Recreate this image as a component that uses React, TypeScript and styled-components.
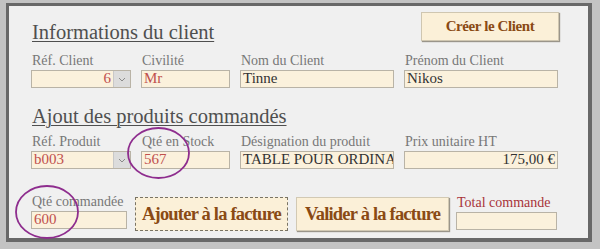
import styled, { createGlobalStyle } from "styled-components"

const GlobalStyle = createGlobalStyle`
  html, body {
    margin: 0;
    padding: 0;
    background: #c3c3c3;
  }
  body {
    font-family: "Liberation Serif", "Times New Roman", serif;
  }
`

type FieldProps = {
  label: string
  value?: string
  width: number
  tone?: "red" | "dark"
  align?: "left" | "right"
  select?: boolean
  labelTone?: "gray" | "red"
}

function Field(props: FieldProps) {
  return (
    <FieldBox $width={props.width}>
      <Label $tone={props.labelTone || "gray"}>{props.label}</Label>
      <InputBox>
        <Value $tone={props.tone || "dark"} $align={props.align || "left"}>
          {props.value}
        </Value>
        {props.select && (
          <DropButton>
            <svg width="8" height="5" viewBox="0 0 8 5">
              <path d="M1 1 L4 4 L7 1" fill="none" stroke="#8a8a8a" strokeWidth="1" />
            </svg>
          </DropButton>
        )}
      </InputBox>
    </FieldBox>
  )
}

export default function App() {
  return (
    <>
      <GlobalStyle />
      <Page>
        <Panel>
          <Header>
            <Title>Informations du client</Title>
            <CreateButton>Créer le Client</CreateButton>
          </Header>
          <FieldRow>
            <Field label="Réf. Client" value="6" width={100} tone="red" align="right" select />
            <Field label="Civilité" value="Mr" width={89} tone="red" />
            <Field label="Nom du Client" value="Tinne" width={154} />
            <Field label="Prénom du Client" value="Nikos" width={154} />
          </FieldRow>
          <SubTitle>Ajout des produits commandés</SubTitle>
          <FieldRow $tight>
            <Field label="Réf. Produit" value="b003" width={100} tone="red" select />
            <Field label="Qté en Stock" value="567" width={89} tone="red" />
            <Field label="Désignation du produit" value="TABLE POUR ORDINATEUR" width={154} />
            <Field label="Prix unitaire HT" value="175,00 €" width={154} align="right" />
          </FieldRow>
          <OrderRow>
            <Field label="Qté commandée" value="600" width={96} tone="red" />
            <ActionButton $dashed>Ajouter à la facture</ActionButton>
            <ActionButton>Valider à la facture</ActionButton>
            <TotalSlot>
              <Field label="Total commande" width={101} labelTone="red" />
            </TotalSlot>
          </OrderRow>
          <Marks width="600" height="249" viewBox="0 0 600 249">
            <ellipse cx="158.5" cy="153" rx="30.5" ry="25" fill="none" stroke="#8e2d8e" strokeWidth="1.8" />
            <ellipse cx="47" cy="212" rx="31" ry="26" fill="none" stroke="#8e2d8e" strokeWidth="1.8" />
          </Marks>
        </Panel>
      </Page>
    </>
  )
}

const Page = styled.div`
  width: 600px;
  height: 249px;
  padding: 3px 0 0 6px;
  box-sizing: border-box;
`

const Panel = styled.div`
  width: 586px;
  height: 239px;
  box-sizing: border-box;
  border-style: solid;
  border-color: #686868;
  border-width: 3px 4px 4px 3px;
  background: #f0f0f0;
  padding: 0 29px 0 22px;
`

const Header = styled.div`
  display: flex;
  justify-content: space-between;
  align-items: flex-start;
  height: 38px;
`

const Title = styled.h2`
  margin: 14px 0 0 1px;
  font-size: 20.5px;
  line-height: 24px;
  font-weight: normal;
  color: #4f4f4f;
  text-decoration: underline;
  text-underline-offset: 2px;
  text-decoration-thickness: 1px;
`

const SubTitle = styled(Title)`
  margin-top: 16px;
`

const CreateButton = styled.button`
  margin-top: 6px;
  width: 138px;
  height: 29px;
  background: #fbf0d8;
  border: 1px solid #cfc6b0;
  box-shadow: 1px 1px 1px #9a958a;
  font-family: inherit;
  font-size: 15px;
  letter-spacing: -0.4px;
  font-weight: bold;
  color: #8a4a14;
  padding: 0;
`

const FieldRow = styled.div<{ $tight?: boolean }>`
  display: flex;
  gap: 10px;
  margin-top: ${(p) => (p.$tight ? "6px" : "9px")};
`

const FieldBox = styled.div<{ $width: number }>`
  display: flex;
  flex-direction: column;
  gap: 1px;
  width: ${(p) => p.$width}px;
`

const Label = styled.span<{ $tone: "gray" | "red" }>`
  font-size: 14px;
  line-height: 16px;
  padding-left: 1px;
  color: ${(p) => (p.$tone === "red" ? "#a8343a" : "#777777")};
  white-space: nowrap;
`

const InputBox = styled.div`
  display: flex;
  height: 18px;
  box-sizing: border-box;
  border: 1px solid #b9b3a6;
  background: #fbf1dc;
  overflow: hidden;
`

const Value = styled.span<{ $tone: "red" | "dark"; $align: "left" | "right" }>`
  flex: 1;
  padding: 0 2px;
  font-size: 15px;
  line-height: 15px;
  white-space: nowrap;
  overflow: hidden;
  text-align: ${(p) => p.$align};
  color: ${(p) => (p.$tone === "red" ? "#c0504d" : "#333333")};
`

const DropButton = styled.span`
  width: 16px;
  display: flex;
  align-items: center;
  justify-content: center;
  background: #dcdcdc;
  border-left: 1px solid #c8c8c8;
`

const OrderRow = styled.div`
  display: flex;
  align-items: flex-start;
  margin-top: 25px;
  gap: 8px;
`

const ActionButton = styled.button<{ $dashed?: boolean }>`
  margin-top: 3px;
  width: 153px;
  height: 34px;
  padding: 0;
  background: #fbf0d8;
  border: 1px ${(p) => (p.$dashed ? "dashed #7a7464" : "solid #d2c9b3")};
  box-shadow: ${(p) => (p.$dashed ? "none" : "1px 1px 1px #9a958a")};
  font-family: inherit;
  font-size: 18.5px;
  letter-spacing: -0.8px;
  font-weight: bold;
  color: #8a4a14;
`

const TotalSlot = styled.div`
  margin: 1px 0 0 -1px;
`

const Marks = styled.svg`
  position: absolute;
  left: 0;
  top: 0;
  pointer-events: none;
`
